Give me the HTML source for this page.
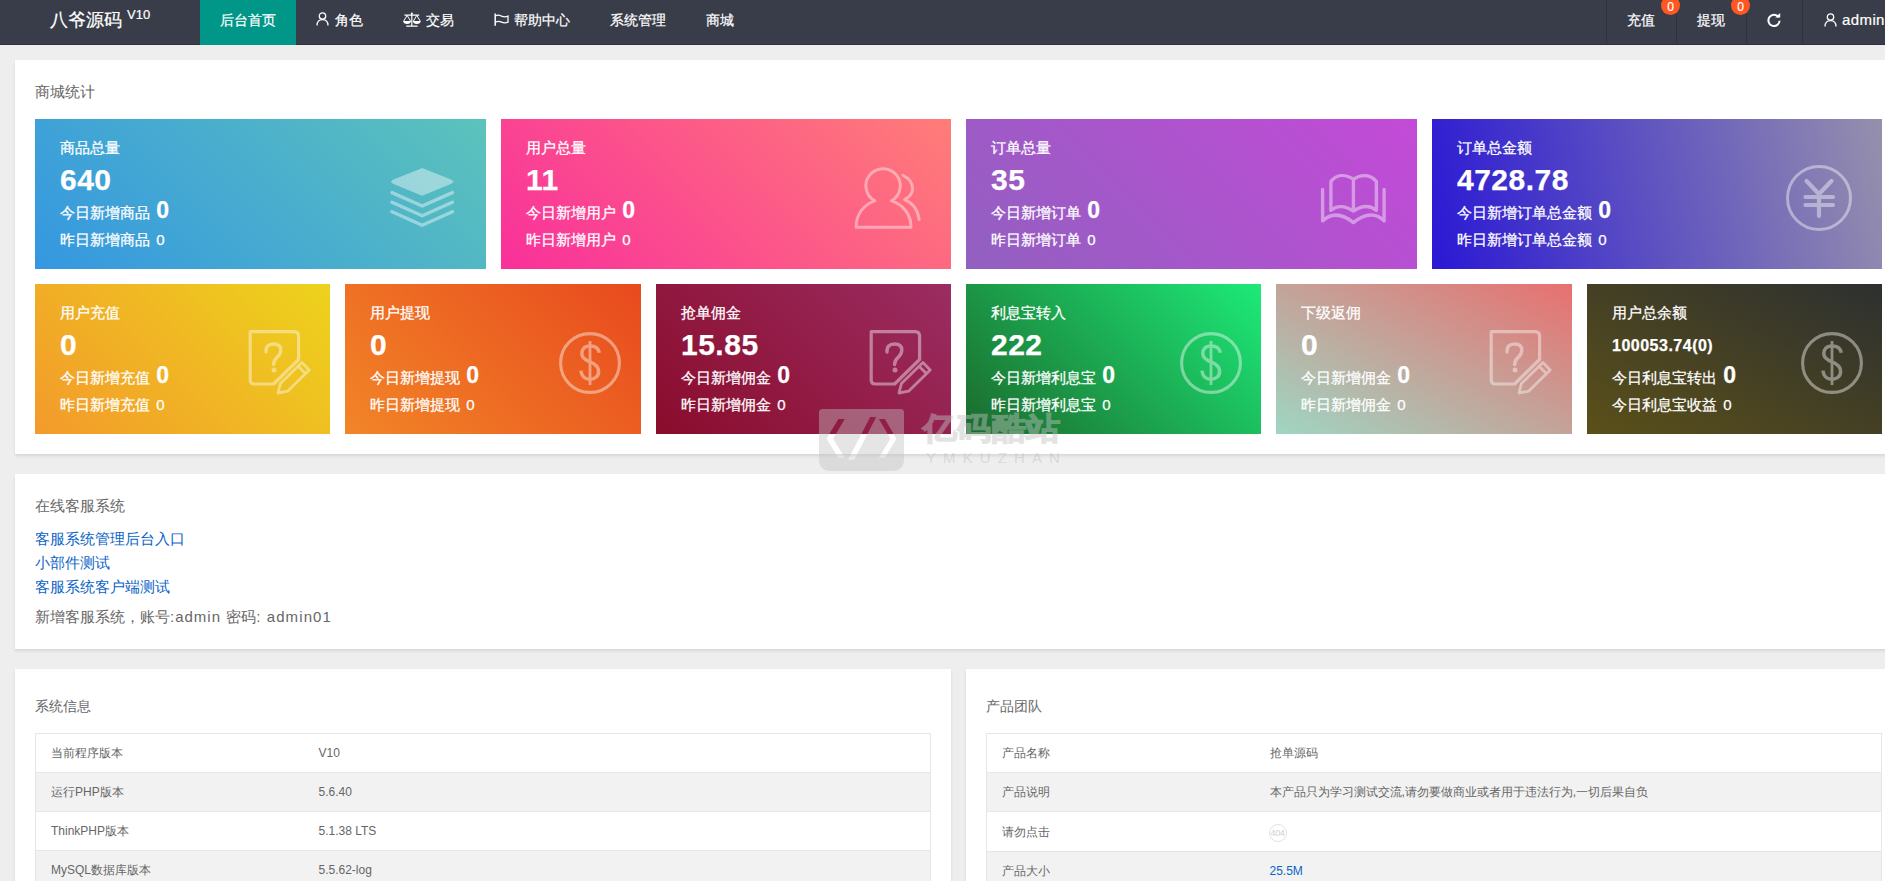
<!DOCTYPE html>
<html><head><meta charset="utf-8">
<style>
*{box-sizing:border-box;margin:0;padding:0}
html,body{width:1885px;height:881px;overflow:hidden}
body{background:#eeeeee;font-family:"Liberation Sans",sans-serif;color:#666;position:relative}
.hdr{position:absolute;left:0;top:0;width:1920px;height:45px;background:#393D49;border-bottom:1px solid #2d303a;-webkit-text-stroke:0.2px #fff}
.logo{position:absolute;left:50px;top:7px;color:#fff;font-size:18px;line-height:26px;white-space:nowrap}
.logo sup{font-size:13px;position:relative;top:2px;vertical-align:top;line-height:12px;margin-left:5px}
.nav{position:absolute;left:200px;top:0;height:45px;display:flex;z-index:2}
.nav a{display:block;padding:0 20px;line-height:40px;height:45px;color:#fff;font-size:14px;text-decoration:none;white-space:nowrap}
.nav a.on{background:#009688}
.nav svg{vertical-align:middle;position:relative;top:-2px}
.sep{position:absolute;top:0;width:1px;height:44px;background:#2f323c}
.rt{position:absolute;top:0;line-height:40px;color:#fff;font-size:14px;white-space:nowrap}
.badge{position:absolute;top:-4px;width:19px;height:19px;border-radius:50%;background:#FF5722;color:#fff;font-size:12px;line-height:23px;text-align:center}
.pnl{position:absolute;background:#fff;box-shadow:0 2px 3px rgba(0,0,0,.1)}
.ttl{position:absolute;left:20px;font-size:15px;color:#666;white-space:nowrap;line-height:20px}
.card{position:absolute;height:150px;color:#fff;overflow:hidden;-webkit-text-stroke:0.25px #fff}
.card .t{position:absolute;left:25px;top:19px;font-size:15px;line-height:20px;white-space:nowrap}
.card .n{position:absolute;left:25px;top:45px;font-size:30px;letter-spacing:0.5px;font-weight:bold;line-height:32px;white-space:nowrap}
.card .a{position:absolute;left:25px;top:81px;font-size:15px;line-height:20px;white-space:nowrap}
.card .a b{font-size:23px;font-weight:bold;margin-left:2px}
.card .y{position:absolute;left:25px;top:111px;font-size:15px;line-height:20px;white-space:nowrap}
.card .y i{font-style:normal;font-size:15px;margin-left:2px}
.card svg{position:absolute}
a.lk{color:#0b63c6;text-decoration:none}
table{position:absolute;border-left:1px solid #e6e6e6;border-right:1px solid #e6e6e6;border-collapse:collapse;font-size:12px;color:#666;table-layout:fixed}
td{border-top:1px solid #e6e6e6;border-bottom:1px solid #e6e6e6;height:39px;padding:0 15px;line-height:20px;white-space:nowrap}
tr:nth-child(even) td{background:#f2f2f2}
.e404{display:inline-block;width:18px;height:18px;border:1px solid #e2e2e2;border-radius:50%;font-size:9px;line-height:17px;text-align:center;color:#d0d0d0;vertical-align:middle;position:relative;left:-1px;top:1px;letter-spacing:-0.3px}
.wm{position:absolute;left:819px;top:409px;width:250px;height:63px}
.wmt{position:absolute;left:104px;top:0px;font-size:34px;transform:scaleY(0.91);transform-origin:0 12px;font-weight:bold;line-height:40px;color:#c2c2c2;-webkit-text-stroke:1.4px #c2c2c2;opacity:0.45;white-space:nowrap;letter-spacing:0.3px}
.wms{position:absolute;left:107px;top:41px;font-size:15px;line-height:16px;color:#aaa;opacity:0.3;letter-spacing:7.1px;white-space:nowrap}

</style></head><body>
<div class="hdr">
<div class="logo">八爷源码<sup>V10</sup></div>
<div class="nav"><a class="on">后台首页</a><a><svg width="13" height="14" viewBox="0 0 13 14" style="margin-right:6px"><circle cx="6.5" cy="4" r="3.2" fill="none" stroke="#fff" stroke-width="1.3"/><path d="M1 13.5 Q1 7.6 6.5 7.6 Q12 7.6 12 13.5" fill="none" stroke="#fff" stroke-width="1.3"/></svg>角色</a><a><svg width="18" height="15" viewBox="0 0 18 15" style="margin-right:5px"><path d="M8.8 1.2V14M3.2 14.1H14.6M1.4 3.1H16.2" fill="none" stroke="#fff" stroke-width="1.2"/><circle cx="8.8" cy="1.4" r="1" fill="#fff"/><path d="M0.5 9.4 L4.1 3.4 L7.7 9.4 M10.2 9.4 L13.8 3.4 L17.4 9.4" fill="none" stroke="#fff" stroke-width="1"/><path d="M0.3 9.1 A3.8 3 0 0 0 7.9 9.1 Z M10 9.1 A3.8 3 0 0 0 17.6 9.1 Z" fill="#fff"/></svg>交易</a><a><svg width="15" height="14" viewBox="0 0 15 14" style="margin-right:5px"><path d="M1.2 1.6V13.8" stroke="#fff" stroke-width="1.5"/><path d="M1.8 3.6 Q4.6 2.6 7.6 4.2 Q10.6 5.6 14 4.2 V10.2 Q10.6 11.6 7.6 10.2 Q4.6 8.8 1.8 10" fill="none" stroke="#fff" stroke-width="1.3"/></svg>帮助中心</a><a>系统管理</a><a>商城</a></div>
<div class="sep" style="left:1606px"></div>
<div class="sep" style="left:1676px"></div>
<div class="sep" style="left:1746px"></div>
<div class="sep" style="left:1802px"></div>
<div class="rt" style="left:1627px">充值</div><div class="badge" style="left:1661px">0</div>
<div class="rt" style="left:1697px">提现</div><div class="badge" style="left:1731px">0</div>
<svg style="position:absolute;left:1767px;top:13px" width="14" height="14" viewBox="0 0 14 14"><path d="M11.6 4.2 A5.6 5.6 0 1 0 12.6 7.8" fill="none" stroke="#fff" stroke-width="2"/><path d="M8.2 4.6 L13.2 4.6 L13.2 0 Z" fill="#fff"/></svg>
<svg style="position:absolute;left:1824px;top:13px" width="13" height="14" viewBox="0 0 13 14"><circle cx="6.5" cy="4" r="3.2" fill="none" stroke="#fff" stroke-width="1.3"/><path d="M1 13.5 Q1 7.6 6.5 7.6 Q12 7.6 12 13.5" fill="none" stroke="#fff" stroke-width="1.3"/></svg>
<div class="rt" style="left:1842px;font-size:15px;letter-spacing:0.4px">admin</div>
</div>
<div class="pnl" style="left:15px;top:60px;width:1888px;height:394px"><div class="ttl" style="top:22px">商城统计</div></div>
<div class="card" style="left:35px;top:119px;width:451px;background:linear-gradient(45deg,#3597e1,#5cc3bb)">
<div class="t">商品总量</div>
<div class="n">640</div>
<div class="a">今日新增商品 <b>0</b></div>
<div class="y">昨日新增商品 <i>0</i></div>
<svg style="left:345px;top:41px" width="90" height="75" viewBox="0 0 90 75"><g opacity="0.42"><path d="M42.2 8.6 L71.5 20.2 Q74.5 21.7 71.5 23.2 L42.2 35.3 L12.9 23.2 Q9.9 21.7 12.9 20.2 Z" fill="#fff" stroke="#fff" stroke-width="1" stroke-linejoin="round"/><path d="M12 32.6 L42.2 46 L72.4 32.6 M12 42.3 L42.2 55.7 L72.4 42.3 M12 51.8 L42.2 65.2 L72.4 51.8" fill="none" stroke="#fff" stroke-width="3.4" stroke-linecap="round" stroke-linejoin="round"/></g></svg>
</div>
<div class="card" style="left:501px;top:119px;width:450px;background:linear-gradient(45deg,#f9309b,#ff7d78)">
<div class="t">用户总量</div>
<div class="n">11</div>
<div class="a">今日新增用户 <b>0</b></div>
<div class="y">昨日新增用户 <i>0</i></div>
<svg style="left:344.25px;top:41px" width="80" height="75" viewBox="0 0 80 75"><g opacity="0.42"><path d="M29.8 40.9 A17.2 17.2 0 1 1 46.4 40.9 C58 44.5 66 54 66 67.3 H11.1 C11.1 54 19 44.5 29.8 40.9 Z" fill="none" stroke="#fff" stroke-width="3" stroke-linejoin="round"/><path d="M57.9 15.3 Q67.8 20 67.6 29 Q67.3 35.5 59.6 39.6 Q72.5 45 74.1 59.6" fill="none" stroke="#fff" stroke-width="3" stroke-linecap="round" stroke-linejoin="round"/></g></svg>
</div>
<div class="card" style="left:966px;top:119px;width:451px;background:linear-gradient(45deg,#9160c0,#c44ad8)">
<div class="t">订单总量</div>
<div class="n">35</div>
<div class="a">今日新增订单 <b>0</b></div>
<div class="y">昨日新增订单 <i>0</i></div>
<svg style="left:343.5px;top:41px" width="90" height="75" viewBox="0 0 90 75"><g opacity="0.42"><path d="M12.6 29.4 V60.9 C19 55 29 51 43.4 62.6 C58 51 68 55 74.1 60.9 V29.4" fill="none" stroke="#fff" stroke-width="3.4" stroke-linecap="round" stroke-linejoin="round"/><path d="M20.9 50.3 V21.3 C26 15.5 34 13 43.4 19.2 C53 13 61 15.5 66.4 21.3 V50.3 C61 46 53 44.5 43.4 51.1 C34 44.5 26 46 20.9 50.3 Z M43.4 19.2 V51.1" fill="none" stroke="#fff" stroke-width="3.4" stroke-linecap="round" stroke-linejoin="round"/></g></svg>
</div>
<div class="card" style="left:1432px;top:119px;width:450px;background:linear-gradient(78deg,#2a18d4,#9690ad)">
<div class="t">订单总金额</div>
<div class="n">4728.78</div>
<div class="a">今日新增订单总金额 <b>0</b></div>
<div class="y">昨日新增订单总金额 <i>0</i></div>
<svg style="left:351.75px;top:43.5px" width="70" height="70" viewBox="0 0 70 70"><g opacity="0.42"><circle cx="35" cy="35" r="31.5" fill="none" stroke="#fff" stroke-width="3"/><path d="M22.5 18 L35 31 L47.5 18 M35 31 V53 M21.5 34 H49 M21.5 42 H49" fill="none" stroke="#fff" stroke-width="4.2" stroke-linecap="round" stroke-linejoin="round"/></g></svg>
</div>
<div class="card" style="left:35px;top:284px;width:295px;background:linear-gradient(45deg,#f39a2b,#edd31c)">
<div class="t">用户充值</div>
<div class="n">0</div>
<div class="a">今日新增充值 <b>0</b></div>
<div class="y">昨日新增充值 <i>0</i></div>
<svg style="left:205px;top:36px" width="80" height="80" viewBox="0 0 80 80"><g opacity="0.42"><path d="M10.2 11.6 H54.1 Q58.6 11.6 58.6 16.1 V39.5 L33.6 64 H14.2 Q10.2 64 10.2 60 Z" fill="none" stroke="#fff" stroke-width="3.2" stroke-linejoin="round"/><path d="M26 32 Q25.5 24 33.6 24 Q40.8 24 40.8 30 Q40.8 34 37 37.5 Q33.6 40.5 33.6 44.5" fill="none" stroke="#fff" stroke-width="3.4" stroke-linecap="round"/><circle cx="34" cy="50" r="2.5" fill="#fff"/><path d="M61.9 42.6 L69.2 49.9 L47.6 71.2 L38 73 L40.4 63.6 Z M58.3 46.4 L65.6 53.7" fill="none" stroke="#fff" stroke-width="2.8" stroke-linejoin="round"/></g></svg>
</div>
<div class="card" style="left:345px;top:284px;width:296px;background:linear-gradient(45deg,#f28527,#e84a1e)">
<div class="t">用户提现</div>
<div class="n">0</div>
<div class="a">今日新增提现 <b>0</b></div>
<div class="y">昨日新增提现 <i>0</i></div>
<svg style="left:211.5px;top:46px" width="66" height="66" viewBox="0 0 66 66"><g opacity="0.42"><circle cx="33" cy="33" r="29.4" fill="none" stroke="#fff" stroke-width="3.1"/><path d="M42.3 22.8 C41.5 18 38 15.9 33 15.9 C27.3 15.9 24.8 19.5 24.8 23.6 C24.8 28.5 29 30.4 33 31.9 C38 33.8 41.6 36 41.6 41.5 C41.6 46.5 37.5 49.3 33 49.3 C27.5 49.3 24.6 46 23.9 40.6" fill="none" stroke="#fff" stroke-width="3.5"/><path d="M33 11 V55" fill="none" stroke="#fff" stroke-width="2.8"/></g></svg>
</div>
<div class="card" style="left:656px;top:284px;width:295px;background:linear-gradient(45deg,#8a0c2c,#9b2d62)">
<div class="t">抢单佣金</div>
<div class="n">15.85</div>
<div class="a">今日新增佣金 <b>0</b></div>
<div class="y">昨日新增佣金 <i>0</i></div>
<svg style="left:205px;top:36px" width="80" height="80" viewBox="0 0 80 80"><g opacity="0.42"><path d="M10.2 11.6 H54.1 Q58.6 11.6 58.6 16.1 V39.5 L33.6 64 H14.2 Q10.2 64 10.2 60 Z" fill="none" stroke="#fff" stroke-width="3.2" stroke-linejoin="round"/><path d="M26 32 Q25.5 24 33.6 24 Q40.8 24 40.8 30 Q40.8 34 37 37.5 Q33.6 40.5 33.6 44.5" fill="none" stroke="#fff" stroke-width="3.4" stroke-linecap="round"/><circle cx="34" cy="50" r="2.5" fill="#fff"/><path d="M61.9 42.6 L69.2 49.9 L47.6 71.2 L38 73 L40.4 63.6 Z M58.3 46.4 L65.6 53.7" fill="none" stroke="#fff" stroke-width="2.8" stroke-linejoin="round"/></g></svg>
</div>
<div class="card" style="left:966px;top:284px;width:295px;background:linear-gradient(45deg,#1b6a2c,#1dea78)">
<div class="t">利息宝转入</div>
<div class="n">222</div>
<div class="a">今日新增利息宝 <b>0</b></div>
<div class="y">昨日新增利息宝 <i>0</i></div>
<svg style="left:211.5px;top:46px" width="66" height="66" viewBox="0 0 66 66"><g opacity="0.42"><circle cx="33" cy="33" r="29.4" fill="none" stroke="#fff" stroke-width="3.1"/><path d="M42.3 22.8 C41.5 18 38 15.9 33 15.9 C27.3 15.9 24.8 19.5 24.8 23.6 C24.8 28.5 29 30.4 33 31.9 C38 33.8 41.6 36 41.6 41.5 C41.6 46.5 37.5 49.3 33 49.3 C27.5 49.3 24.6 46 23.9 40.6" fill="none" stroke="#fff" stroke-width="3.5"/><path d="M33 11 V55" fill="none" stroke="#fff" stroke-width="2.8"/></g></svg>
</div>
<div class="card" style="left:1276px;top:284px;width:296px;background:linear-gradient(to top right,#9fd6c2,#e87070)">
<div class="t">下级返佣</div>
<div class="n">0</div>
<div class="a">今日新增佣金 <b>0</b></div>
<div class="y">昨日新增佣金 <i>0</i></div>
<svg style="left:205px;top:36px" width="80" height="80" viewBox="0 0 80 80"><g opacity="0.42"><path d="M10.2 11.6 H54.1 Q58.6 11.6 58.6 16.1 V39.5 L33.6 64 H14.2 Q10.2 64 10.2 60 Z" fill="none" stroke="#fff" stroke-width="3.2" stroke-linejoin="round"/><path d="M26 32 Q25.5 24 33.6 24 Q40.8 24 40.8 30 Q40.8 34 37 37.5 Q33.6 40.5 33.6 44.5" fill="none" stroke="#fff" stroke-width="3.4" stroke-linecap="round"/><circle cx="34" cy="50" r="2.5" fill="#fff"/><path d="M61.9 42.6 L69.2 49.9 L47.6 71.2 L38 73 L40.4 63.6 Z M58.3 46.4 L65.6 53.7" fill="none" stroke="#fff" stroke-width="2.8" stroke-linejoin="round"/></g></svg>
</div>
<div class="card" style="left:1587px;top:284px;width:295px;background:linear-gradient(to top right,#5b5019,#2d3030)">
<div class="t">用户总余额</div>
<div class="n" style="font-size:16px;top:46px">100053.74(0)</div>
<div class="a">今日利息宝转出 <b>0</b></div>
<div class="y">今日利息宝收益 <i>0</i></div>
<svg style="left:211.5px;top:46px" width="66" height="66" viewBox="0 0 66 66"><g opacity="0.42"><circle cx="33" cy="33" r="29.4" fill="none" stroke="#fff" stroke-width="3.1"/><path d="M42.3 22.8 C41.5 18 38 15.9 33 15.9 C27.3 15.9 24.8 19.5 24.8 23.6 C24.8 28.5 29 30.4 33 31.9 C38 33.8 41.6 36 41.6 41.5 C41.6 46.5 37.5 49.3 33 49.3 C27.5 49.3 24.6 46 23.9 40.6" fill="none" stroke="#fff" stroke-width="3.5"/><path d="M33 11 V55" fill="none" stroke="#fff" stroke-width="2.8"/></g></svg>
</div>
<div class="pnl" style="left:15px;top:474px;width:1888px;height:175px">
<div class="ttl" style="top:22px">在线客服系统</div>
<div style="position:absolute;left:20px;top:52.5px;font-size:15px;line-height:24px"><a class="lk">客服系统管理后台入口</a><br><a class="lk">小部件测试</a><br><a class="lk">客服系统客户端测试</a></div>
<div style="position:absolute;left:20px;top:133px;font-size:15px;line-height:20px;color:#666;white-space:nowrap">新增客服系统，账号<span style="letter-spacing:1px">:admin </span>密码<span style="letter-spacing:1.1px">: admin01</span></div>
</div>
<div class="pnl" style="left:15px;top:669px;width:936px;height:300px">
<div class="ttl" style="top:27px;font-size:14px">系统信息</div>
<table style="left:20px;top:64px;width:896px"><tr><td style="width:268px">当前程序版本</td><td>V10</td></tr><tr><td style="width:268px">运行PHP版本</td><td>5.6.40</td></tr><tr><td style="width:268px">ThinkPHP版本</td><td>5.1.38 LTS</td></tr><tr><td style="width:268px">MySQL数据库版本</td><td>5.5.62-log</td></tr></table>
</div>
<div class="pnl" style="left:966px;top:669px;width:937px;height:300px">
<div class="ttl" style="top:27px;font-size:14px">产品团队</div>
<table style="left:20px;top:64px;width:896px"><tr><td style="width:268px">产品名称</td><td>抢单源码</td></tr><tr><td style="width:268px">产品说明</td><td>本产品只为学习测试交流,请勿要做商业或者用于违法行为,一切后果自负</td></tr><tr><td style="width:268px;height:40px">请勿点击</td><td><span class="e404">404</span></td></tr><tr><td style="width:268px">产品大小</td><td><a class="lk">25.5M</a></td></tr></table>
</div>
<div class="wm">
<svg style="position:absolute;left:0;top:0" width="86" height="63" viewBox="0 0 86 63"><path fill-rule="evenodd" fill="rgba(194,194,194,0.42)" d="M3.5 0 H81.5 Q85 0 85 3.5 V50 Q85 62 73 62 H12 Q0 62 0 50 V3.5 Q0 0 3.5 0 Z M19.4 9.9 H25.8 L14 29.8 L25.8 48.8 H19.4 L7.5 29.8 Z M51.2 7.9 H57.2 L35.3 50.8 H29 Z M59.9 9.9 H65.9 L77.4 29.8 L65.9 48.8 H59.9 L71.4 29.8 Z"/></svg>
<div class="wmt">亿码酷站</div><div class="wms">YMKUZHAN</div>
</div>
</body></html>
